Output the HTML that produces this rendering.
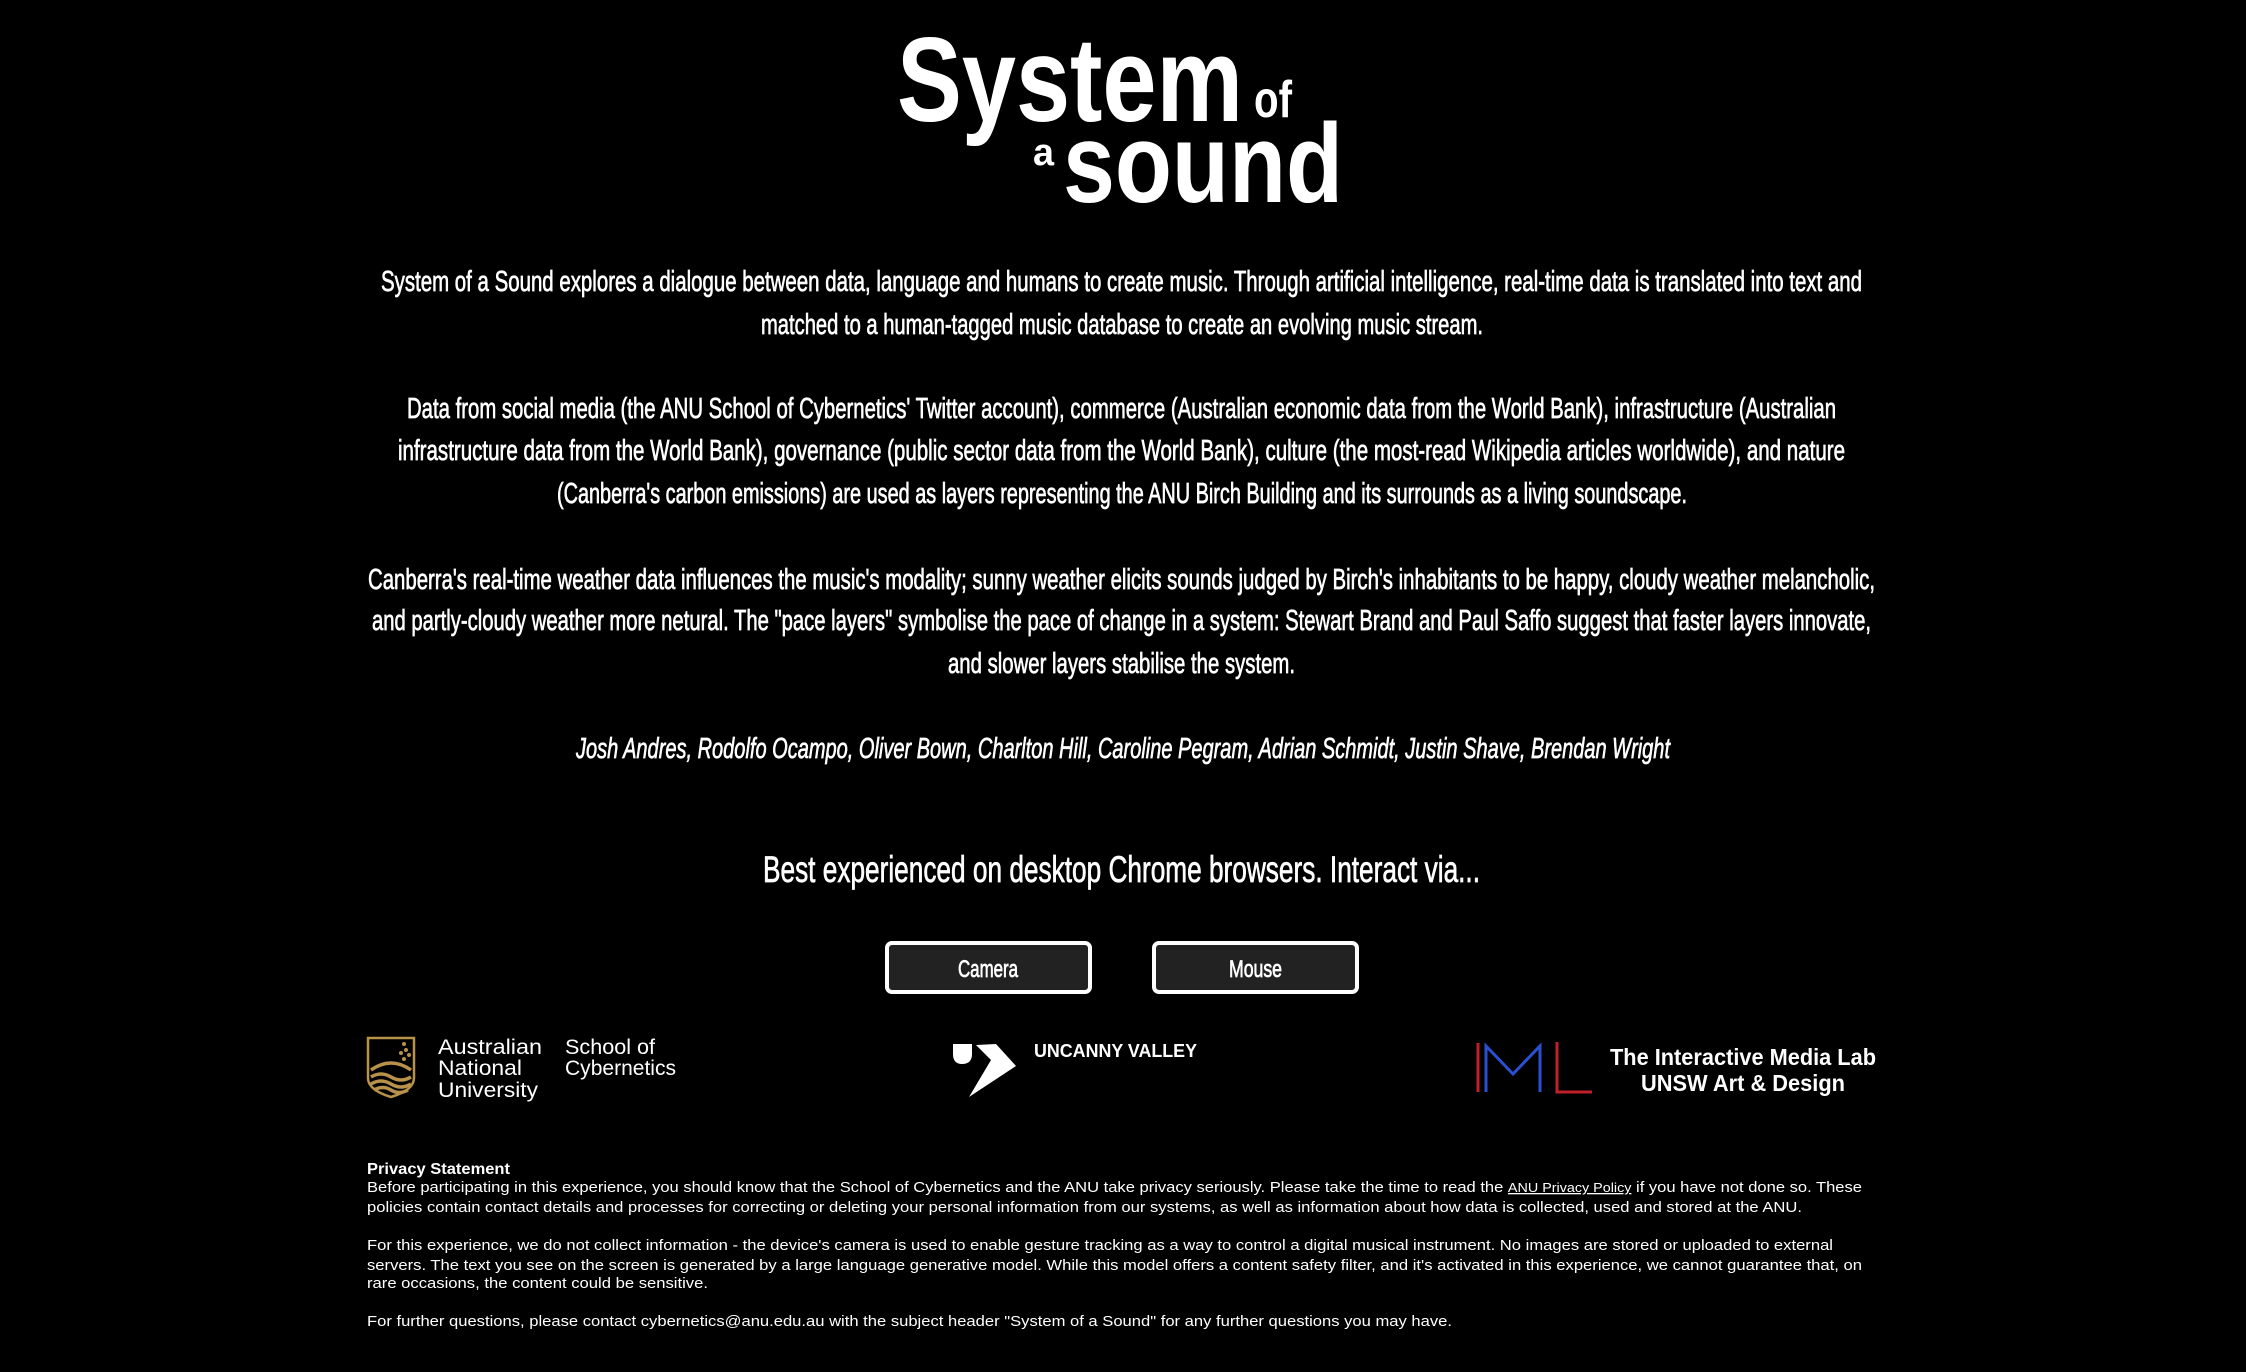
<!DOCTYPE html>
<html><head><meta charset="utf-8"><style>
html,body{margin:0;padding:0;background:#000;width:2246px;height:1372px;overflow:hidden}
svg{display:block}
.c{font-family:"Liberation Sans Narrow","Liberation Sans",sans-serif;fill:#fff;stroke:#fff;stroke-width:0.7px}
.p{font-family:"Liberation Sans",sans-serif;fill:#fff;font-size:15px}
</style></head><body>
<svg width="2246" height="1372" viewBox="0 0 2246 1372" xmlns="http://www.w3.org/2000/svg">
<rect width="2246" height="1372" fill="#000"/>
<g font-family="Liberation Sans Narrow, Liberation Sans, sans-serif" font-weight="bold" fill="#fff">
<text x="897" y="121" font-size="120" textLength="346" lengthAdjust="spacingAndGlyphs">System</text>
<text x="1254" y="117" font-size="52" textLength="38" lengthAdjust="spacingAndGlyphs">of</text>
<text x="1033" y="165" font-size="38" textLength="21" lengthAdjust="spacingAndGlyphs">a</text>
<text x="1063" y="202" font-size="112" textLength="280" lengthAdjust="spacingAndGlyphs">sound</text>
</g>
<g class="c" font-size="29">
<text x="381" y="291" textLength="1481" lengthAdjust="spacingAndGlyphs">System of a Sound explores a dialogue between data, language and humans to create music. Through artificial intelligence, real-time data is translated into text and</text>
<text x="761" y="334" textLength="722" lengthAdjust="spacingAndGlyphs">matched to a human-tagged music database to create an evolving music stream.</text>
<text x="407" y="418" textLength="1429" lengthAdjust="spacingAndGlyphs">Data from social media (the ANU School of Cybernetics' Twitter account), commerce (Australian economic data from the World Bank), infrastructure (Australian</text>
<text x="398" y="460" textLength="1447" lengthAdjust="spacingAndGlyphs">infrastructure data from the World Bank), governance (public sector data from the World Bank), culture (the most-read Wikipedia articles worldwide), and nature</text>
<text x="557" y="503" textLength="1130" lengthAdjust="spacingAndGlyphs">(Canberra's carbon emissions) are used as layers representing the ANU Birch Building and its surrounds as a living soundscape.</text>
<text x="368" y="589" textLength="1507" lengthAdjust="spacingAndGlyphs">Canberra's real-time weather data influences the music's modality; sunny weather elicits sounds judged by Birch's inhabitants to be happy, cloudy weather melancholic,</text>
<text x="372" y="630" textLength="1499" lengthAdjust="spacingAndGlyphs">and partly-cloudy weather more netural. The "pace layers" symbolise the pace of change in a system: Stewart Brand and Paul Saffo suggest that faster layers innovate,</text>
<text x="948" y="673" textLength="347" lengthAdjust="spacingAndGlyphs">and slower layers stabilise the system.</text>
<text x="576" y="758" font-style="italic" textLength="1094" lengthAdjust="spacingAndGlyphs">Josh Andres, Rodolfo Ocampo, Oliver Bown, Charlton Hill, Caroline Pegram, Adrian Schmidt, Justin Shave, Brendan Wright</text>
<text x="763" y="882" font-size="37" textLength="717" lengthAdjust="spacingAndGlyphs">Best experienced on desktop Chrome browsers. Interact via...</text>
</g>
<rect x="887" y="943" width="203" height="49" rx="5" fill="#222" stroke="#fff" stroke-width="4"/>
<rect x="1154" y="943" width="203" height="49" rx="5" fill="#222" stroke="#fff" stroke-width="4"/>
<g class="c" font-size="24">
<text x="958" y="977" textLength="60" lengthAdjust="spacingAndGlyphs">Camera</text>
<text x="1229" y="977" textLength="53" lengthAdjust="spacingAndGlyphs">Mouse</text>
</g>
<g fill="none" stroke="#b8924a" stroke-width="2.5">
<path d="M368 1038 H414 V1078 Q414 1090 391 1097 Q368 1090 368 1078 Z"/>
<path d="M371 1070 Q391 1056 411 1070 M371 1077 Q381 1071 391 1077 Q401 1083 411 1077 M371 1084 Q381 1078 391 1084 Q401 1090 411 1084 M374 1090 Q383 1085 391 1090 Q399 1095 408 1090" stroke-width="3.5"/>
</g>
<g fill="#b8924a"><circle cx="404" cy="1044" r="2"/><circle cx="406" cy="1050" r="2"/><circle cx="401" cy="1053" r="2"/><circle cx="409" cy="1055" r="2"/><circle cx="404" cy="1059" r="2"/></g>
<g font-family="Liberation Sans Narrow, Liberation Sans, sans-serif" fill="#fff" font-size="21">
<text x="438" y="1054" textLength="104" lengthAdjust="spacingAndGlyphs">Australian</text>
<text x="438" y="1075" textLength="84" lengthAdjust="spacingAndGlyphs">National</text>
<text x="438" y="1097" textLength="100" lengthAdjust="spacingAndGlyphs">University</text>
<text x="565" y="1054" textLength="90" lengthAdjust="spacingAndGlyphs">School of</text>
<text x="565" y="1075" textLength="111" lengthAdjust="spacingAndGlyphs">Cybernetics</text>
</g>
<path d="M953 1044 H972 V1054 Q972 1064 962 1064 Q953 1064 953 1054 Z" fill="#fff"/>
<path d="M976 1045 L996 1044 L1016 1066 L969 1097 L991 1060 Z" fill="#fff"/>
<text x="1034" y="1057" font-family="Liberation Sans Narrow, Liberation Sans, sans-serif" font-weight="600" font-size="18" fill="#fff" textLength="163" lengthAdjust="spacingAndGlyphs">UNCANNY VALLEY</text>
<g fill="none" stroke-width="3">
<path d="M1478 1043 V1092" stroke="#c0202a"/>
<path d="M1486 1092 V1046 L1513 1074 L1540 1046 V1092" stroke="#2a4fd0"/>
<path d="M1557 1042 V1092 H1592" stroke="#c0202a"/>
</g>
<g font-family="Liberation Sans Narrow, Liberation Sans, sans-serif" font-weight="bold" fill="#fff" font-size="23">
<text x="1610" y="1065" textLength="266" lengthAdjust="spacingAndGlyphs">The Interactive Media Lab</text>
<text x="1641" y="1091" textLength="204" lengthAdjust="spacingAndGlyphs">UNSW Art &amp; Design</text>
</g>
<text x="367" y="1174" font-family="Liberation Sans, sans-serif" font-weight="bold" font-size="16" fill="#fff" textLength="143" lengthAdjust="spacingAndGlyphs">Privacy Statement</text>
<g class="p">
<text x="367" y="1192" textLength="1495" lengthAdjust="spacingAndGlyphs">Before participating in this experience, you should know that the School of Cybernetics and the ANU take privacy seriously. Please take the time to read the <tspan text-decoration="underline" font-size="13">ANU Privacy Policy</tspan> if you have not done so. These</text>
<text x="367" y="1212" textLength="1435" lengthAdjust="spacingAndGlyphs">policies contain contact details and processes for correcting or deleting your personal information from our systems, as well as information about how data is collected, used and stored at the ANU.</text>
<text x="367" y="1250" textLength="1466" lengthAdjust="spacingAndGlyphs">For this experience, we do not collect information - the device's camera is used to enable gesture tracking as a way to control a digital musical instrument. No images are stored or uploaded to external</text>
<text x="367" y="1270" textLength="1495" lengthAdjust="spacingAndGlyphs">servers. The text you see on the screen is generated by a large language generative model. While this model offers a content safety filter, and it's activated in this experience, we cannot guarantee that, on</text>
<text x="367" y="1288" textLength="341" lengthAdjust="spacingAndGlyphs">rare occasions, the content could be sensitive.</text>
<text x="367" y="1326" textLength="1085" lengthAdjust="spacingAndGlyphs">For further questions, please contact cybernetics@anu.edu.au with the subject header "System of a Sound" for any further questions you may have.</text>
</g>
</svg>
</body></html>
